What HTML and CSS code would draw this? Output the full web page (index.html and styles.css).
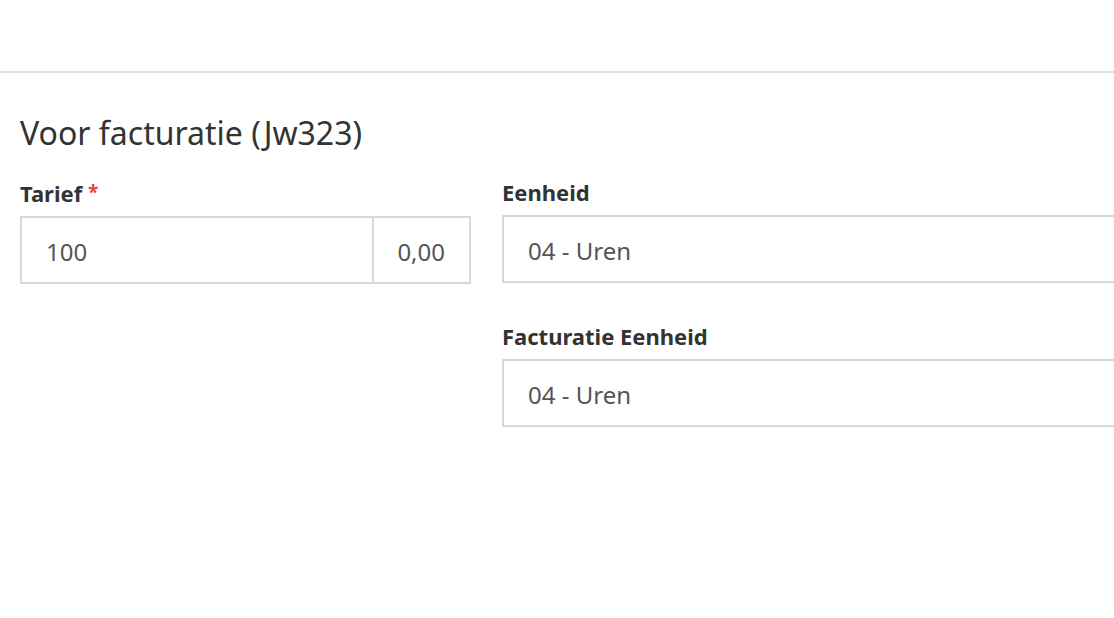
FILE: index.html
```html
<!DOCTYPE html>
<html lang="nl">
<head>
<meta charset="utf-8">
<title>Voor facturatie</title>
<link rel="stylesheet" href="styles.css">
</head>
<body>
<div class="topbar"></div>
<section class="section">
  <h2 class="title">Voor facturatie (Jw323)</h2>
  <div class="grid">
    <div class="col">
      <div class="field">
        <label class="label">Tarief <span class="req">*</span></label>
        <div class="input-group">
          <div class="input main">100</div>
          <div class="input addon">0,00</div>
        </div>
      </div>
    </div>
    <div class="col">
      <div class="field">
        <label class="label">Eenheid</label>
        <div class="input-group"><div class="input main">04 - Uren</div></div>
      </div>
      <div class="field">
        <label class="label">Facturatie Eenheid</label>
        <div class="input-group"><div class="input main">04 - Uren</div></div>
      </div>
    </div>
  </div>
</section>
</body>
</html>
```
FILE: styles.css
```css
html, body { margin: 0; padding: 0; background: #fff; overflow: hidden; }
body { font-family: "Noto Sans", "Open Sans", sans-serif; color: #333; width: 1114px; height: 618px; }
.topbar { height: 71px; border-bottom: 2px solid #e0e0e0; }
.section { padding: 0 20px; }
.title { margin: 0; padding-top: 40px; font-size: 32px; font-weight: 400; line-height: 40px; color: #333; letter-spacing: 0; }
.grid { display: grid; grid-template-columns: 451px 700px; column-gap: 31px; margin-top: 25px; }
.field { margin-bottom: 39px; }
.label { display: block; font-size: 22px; font-weight: 700; line-height: 28px; margin-bottom: 9px; color: #333; letter-spacing: 0; }
.req { color: #e0483c; font-size: 19px; vertical-align: 3px; }
.input-group { display: flex; height: 68px; border: 2px solid #d4d8e1; box-sizing: border-box; }
.input { display: flex; align-items: center; padding-top: 3px; font-size: 24px; color: #555; }
.main { flex: 1; padding-left: 24px; }
.addon { padding: 3px 24px 0 23px; border-left: 2px solid #d4d8e1; }
```
